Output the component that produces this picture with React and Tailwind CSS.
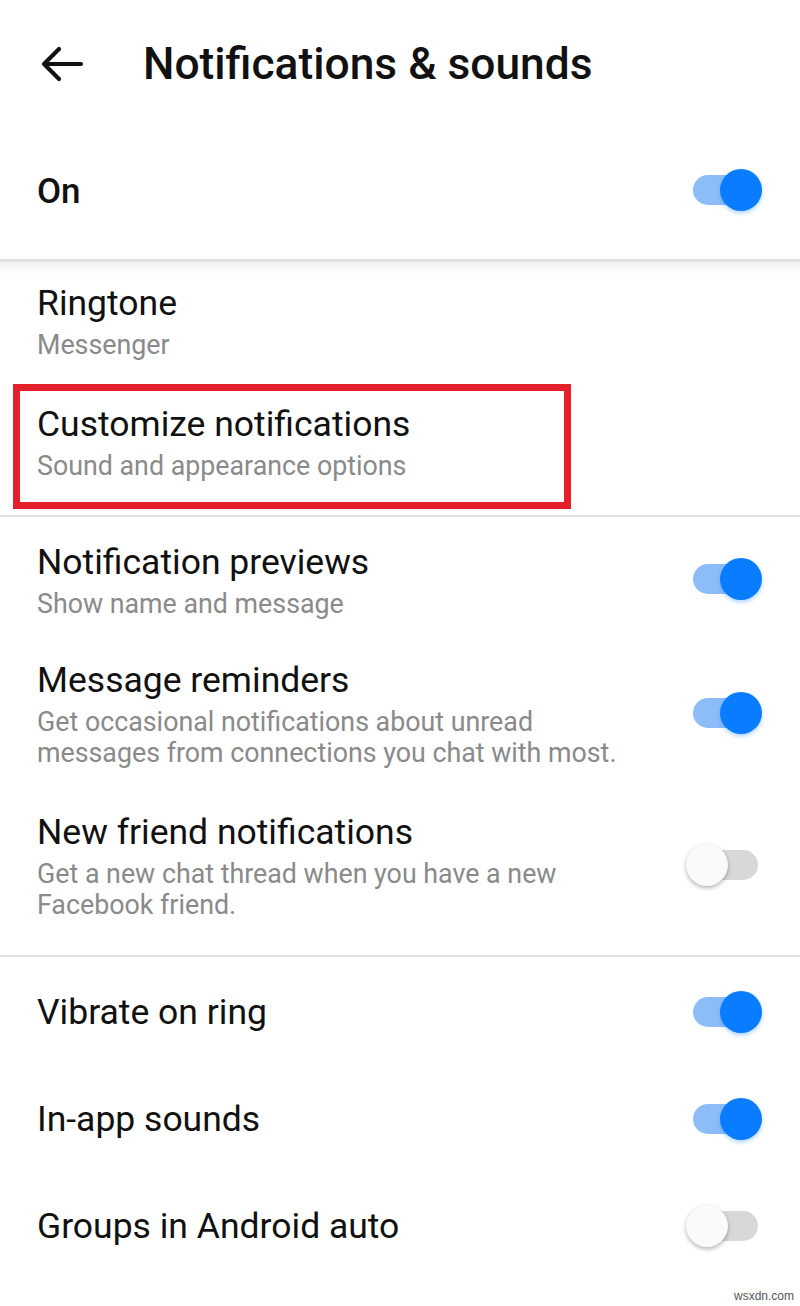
import React from "react";

function Toggle({ on }) {
  return (
    <div className="relative w-[76px] h-[44px] shrink-0 flex items-center">
      <div
        className={
          "absolute left-[7px] right-[4px] h-[30px] rounded-full " +
          (on ? "bg-[#8dbdf9]" : "bg-[#d8d8d8]")
        }
      />
      <div
        className={
          "absolute w-[42px] h-[42px] rounded-full " +
          (on
            ? "right-0 bg-[#0a7cff] shadow-[0_2px_4px_rgba(10,124,255,0.35)]"
            : "left-0 bg-[#fafafa] shadow-[0_2px_4px_rgba(0,0,0,0.3)]")
        }
      />
    </div>
  );
}

function TwoLine({ title, sub, className = "" }) {
  return (
    <div className={"flex flex-col " + className}>
      <div className="text-[35.5px] leading-[48px] text-[#111111]">{title}</div>
      <div className="mt-[3px] text-[26.8px] leading-[31px] text-[#8a8a8a]">
        {sub}
      </div>
    </div>
  );
}

function ToggleRow({ title, sub, on, className = "" }) {
  return (
    <div className={"flex items-center justify-between pl-[37px] pr-[38px] " + className}>
      <TwoLine title={title} sub={sub} />
      <Toggle on={on} />
    </div>
  );
}

function SimpleRow({ title, on }) {
  return (
    <div className="flex items-center justify-between h-[107px] pl-[37px] pr-[38px]">
      <div className="text-[35.5px] leading-[48px] text-[#111111]">{title}</div>
      <Toggle on={on} />
    </div>
  );
}

export default function App() {
  return (
    <div
      className="w-[800px] h-[1306px] bg-white overflow-hidden relative"
      style={{ fontFamily: "Roboto, 'Noto Sans', sans-serif" }}
    >
      {/* header */}
      <div className="h-[128px] flex items-center">
        <div className="w-[143px] flex items-center pl-[40px]">
          <svg width="44" height="36" viewBox="0 0 44 36" fill="none">
            <path
              d="M41 18H5M19 3L4 18l15 15"
              stroke="#111"
              strokeWidth="4.2"
              strokeLinecap="round"
              strokeLinejoin="round"
            />
          </svg>
        </div>
        <div className="text-[44.3px] font-medium text-[#111111] leading-none">
          Notifications &amp; sounds
        </div>
      </div>

      {/* On row */}
      <div className="h-[131px] flex items-center justify-between pl-[37px] pr-[38px]">
        <div className="text-[35px] font-medium text-[#111111] leading-none -mt-[4px]">On</div>
        <div className="-mt-[8px]">
          <Toggle on />
        </div>
      </div>

      {/* shadow divider */}
      <div className="h-[3px] bg-[#e2e2e2]" />
      <div className="h-[12px] bg-gradient-to-b from-[#f2f2f2] to-white" />

      {/* Ringtone */}
      <TwoLine title="Ringtone" sub="Messenger" className="pl-[37px] mt-[5px]" />

      {/* Customize notifications */}
      <div className="relative mt-[39px]">
        <TwoLine
          title="Customize notifications"
          sub="Sound and appearance options"
          className="pl-[37px]"
        />
        <div className="absolute left-[13px] top-[-16px] w-[558px] h-[125px] border-[7px] border-[#e3202c]" />
      </div>

      <div className="mt-[33px] h-[2px] bg-[#e0e0e0]" />

      <ToggleRow
        title="Notification previews"
        sub="Show name and message"
        on
        className="mt-[21px]"
      />
      <ToggleRow
        title="Message reminders"
        sub={
          <>
            Get occasional notifications about unread
            <br />
            messages from connections you chat with most.
          </>
        }
        on
        className="mt-[36px]"
      />
      <ToggleRow
        title="New friend notifications"
        sub={
          <>
            Get a new chat thread when you have a new
            <br />
            Facebook friend.
          </>
        }
        on={false}
        className="mt-[39px]"
      />

      <div className="mt-[34px] h-[2px] bg-[#e0e0e0]" />

      <div className="pt-[1px]">
        <SimpleRow title="Vibrate on ring" on />
        <SimpleRow title="In-app sounds" on />
        <SimpleRow title="Groups in Android auto" on={false} />
      </div>

      <div
        className="absolute right-[6px] bottom-[1px] text-[12px] text-[#555]"
        style={{ fontFamily: "'Liberation Sans', Arial, sans-serif" }}
      >
        wsxdn.com
      </div>
    </div>
  );
}
